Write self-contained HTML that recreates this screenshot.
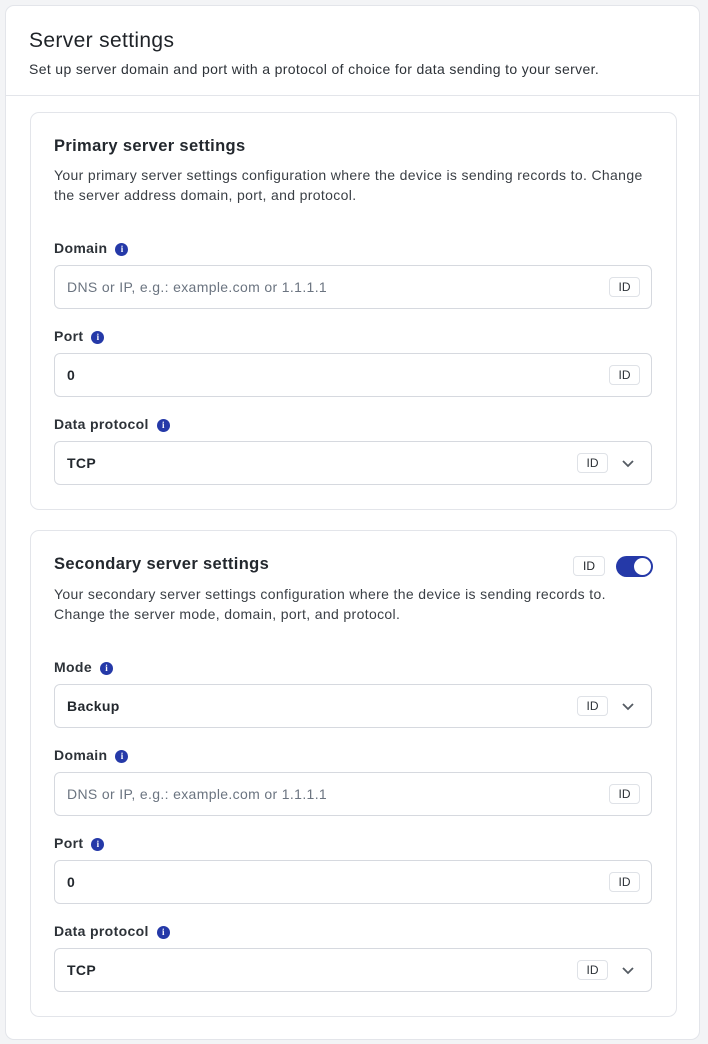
<!DOCTYPE html>
<html><head><style>
*{box-sizing:border-box;margin:0;padding:0}
body{width:708px;height:1044px;background:#f3f4f6;font-family:"Liberation Sans",sans-serif;color:#1f2328;position:relative;overflow:hidden;letter-spacing:0.35px}
.abs{position:absolute}
.outer{left:5px;top:5px;width:695px;height:1035px;background:#fff;border:1px solid #e3e5ea;border-radius:9px}
.div{left:5px;top:95px;width:695px;height:1px;background:#e3e5ea}
.card{left:30px;width:647px;border:1px solid #e3e5ea;border-radius:9px;background:#fff}
.h1{font-size:21px;left:29px;top:29px}
.sub{font-size:14px;left:29px;top:61px;color:#2d3238}
.h2{font-size:16.5px;font-weight:bold;color:#23282e;left:54px}
.desc{font-size:14px;line-height:20px;color:#3a3f45;left:54px;width:600px}
.lbl{font-size:14px;font-weight:bold;color:#2d3238;left:54px}
.info{display:inline-block;width:13px;height:13px;border-radius:50%;background:#2539a8;color:#fff;font-size:9px;font-weight:bold;text-align:center;line-height:13px;margin-left:8px;vertical-align:1px;font-family:"Liberation Serif",serif;letter-spacing:0}
.inp{left:54px;width:598px;height:44px;border:1px solid #d6d9df;border-radius:6px;font-size:14px;padding-left:12px;line-height:42px}
.ph{color:#6b7480}
.val{font-weight:bold;color:#23282e}
.id{position:absolute;top:11px;width:31px;height:20px;border:1px solid #dfe2e7;border-radius:4px;font-size:12px;line-height:18px;text-align:center;color:#2d3238;font-weight:normal;letter-spacing:0}
.chev{position:absolute;right:16px;top:14px}
</style></head><body>
<div class="abs outer"></div>
<div class="abs div"></div>
<div class="abs h1">Server settings</div>
<div class="abs sub">Set up server domain and port with a protocol of choice for data sending to your server.</div>

<div class="abs card" style="top:112px;height:398px"></div>
<div class="abs h2" style="top:137px">Primary server settings</div>
<div class="abs desc" style="top:165px">Your primary server settings configuration where the device is sending records to. Change the server address domain, port, and protocol.</div>
<div class="abs lbl" style="top:240px">Domain<span class="info">i</span></div>
<div class="abs inp" style="top:265px"><span class="ph">DNS or IP, e.g.: example.com or 1.1.1.1</span><span class="id" style="left:554px">ID</span></div>
<div class="abs lbl" style="top:328px">Port<span class="info">i</span></div>
<div class="abs inp" style="top:353px"><span class="val">0</span><span class="id" style="left:554px">ID</span></div>
<div class="abs lbl" style="top:416px">Data protocol<span class="info">i</span></div>
<div class="abs inp" style="top:441px"><span class="val">TCP</span><span class="id" style="left:522px">ID</span><svg class="chev" width="14" height="14" viewBox="0 0 14 14"><path d="M2 5l5 5 5-5" fill="none" stroke="#555b63" stroke-width="1.8"/></svg></div>

<div class="abs card" style="top:530px;height:487px"></div>
<div class="abs h2" style="top:555px">Secondary server settings</div>
<div class="abs" style="left:573px;top:556px;width:32px;height:20px;border:1px solid #dfe2e7;border-radius:4px;font-size:12px;line-height:18px;text-align:center;letter-spacing:0">ID</div>
<div class="abs" style="left:616px;top:556px;width:37px;height:21px;border-radius:11px;background:#2539a8"><div class="abs" style="right:2px;top:2px;width:17px;height:17px;border-radius:50%;background:#fff"></div></div>
<div class="abs desc" style="top:584px">Your secondary server settings configuration where the device is sending records to. Change the server mode, domain, port, and protocol.</div>
<div class="abs lbl" style="top:659px">Mode<span class="info">i</span></div>
<div class="abs inp" style="top:684px"><span class="val">Backup</span><span class="id" style="left:522px">ID</span><svg class="chev" width="14" height="14" viewBox="0 0 14 14"><path d="M2 5l5 5 5-5" fill="none" stroke="#555b63" stroke-width="1.8"/></svg></div>
<div class="abs lbl" style="top:747px">Domain<span class="info">i</span></div>
<div class="abs inp" style="top:772px"><span class="ph">DNS or IP, e.g.: example.com or 1.1.1.1</span><span class="id" style="left:554px">ID</span></div>
<div class="abs lbl" style="top:835px">Port<span class="info">i</span></div>
<div class="abs inp" style="top:860px"><span class="val">0</span><span class="id" style="left:554px">ID</span></div>
<div class="abs lbl" style="top:923px">Data protocol<span class="info">i</span></div>
<div class="abs inp" style="top:948px"><span class="val">TCP</span><span class="id" style="left:522px">ID</span><svg class="chev" width="14" height="14" viewBox="0 0 14 14"><path d="M2 5l5 5 5-5" fill="none" stroke="#555b63" stroke-width="1.8"/></svg></div>
</body></html>
